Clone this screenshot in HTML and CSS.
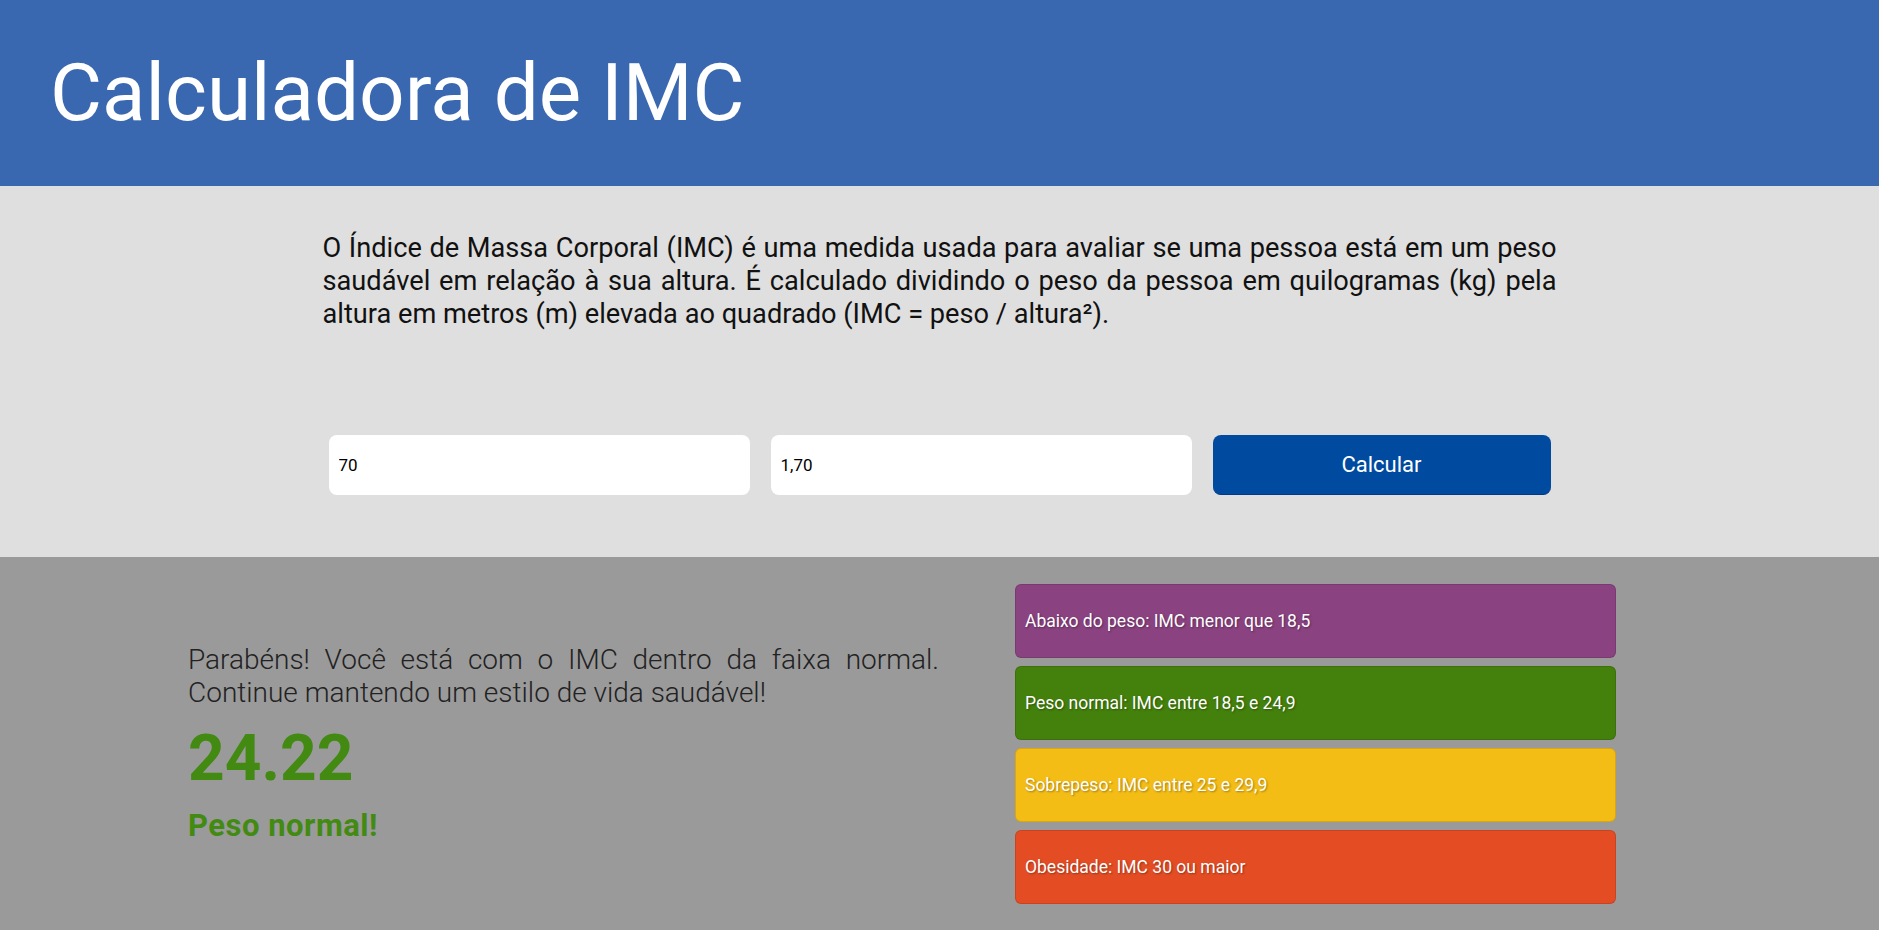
FILE: index.html
```html
<!DOCTYPE html>
<html lang="pt-BR">
<head>
<meta charset="utf-8">
<title>Calculadora de IMC</title>
<link rel="stylesheet" href="styles.css">
</head>
<body>
<header class="topbar">
  <h1 class="title">Calculadora de IMC</h1>
</header>
<section class="intro">
  <div class="intro-inner">
    <p class="lead">O Índice de Massa Corporal (IMC) é uma medida usada para avaliar se uma pessoa está em um peso saudável em relação à sua altura. É calculado dividindo o peso da pessoa em quilogramas (kg) pela altura em metros (m) elevada ao quadrado (IMC = peso / altura²).</p>
    <form class="form">
      <input class="field" type="text" value="70">
      <input class="field" type="text" value="1,70">
      <button class="btn" type="button">Calcular</button>
    </form>
  </div>
</section>
<section class="result">
  <div class="result-text">
    <p class="message">Parabéns! Você está com o IMC dentro da faixa normal. Continue mantendo um estilo de vida saudável!</p>
    <div class="value">24.22</div>
    <div class="status">Peso normal!</div>
  </div>
  <ul class="ranges">
    <li class="range range-under">Abaixo do peso: IMC menor que 18,5</li>
    <li class="range range-normal">Peso normal: IMC entre 18,5 e 24,9</li>
    <li class="range range-over">Sobrepeso: IMC entre 25 e 29,9</li>
    <li class="range range-obese">Obesidade: IMC 30 ou maior</li>
  </ul>
</section>
</body>
</html>
```
FILE: styles.css
```css
* { box-sizing: border-box; }
html, body { margin: 0; padding: 0; }
body {
  font-family: Roboto, "Liberation Sans", sans-serif;
  background: #9a9a9a;
  width: 1879px;
  height: 930px;
  overflow: hidden;
}
.topbar {
  background: #3a68b0;
  height: 186px;
  display: flex;
  align-items: center;
  padding: 0 50px;
}
.title {
  margin: 0;
  color: #ffffff;
  font-weight: 400;
  font-size: 80px;
}
.intro {
  background: #dfdfdf;
  height: 371px;
  padding-top: 46px;
}
.intro-inner {
  width: 1234px;
  margin: 0 auto;
}
.lead {
  margin: 0;
  font-size: 27.2px;
  line-height: 33px;
  color: #111;
  text-align: justify;
}
.form {
  display: flex;
  gap: 21px;
  padding: 0 6px;
  margin-top: 104px;
}
.field {
  width: 421px;
  height: 60px;
  border: none;
  border-radius: 8px;
  background: #fff;
  padding: 0 10px;
  font-family: Roboto, "Liberation Sans", sans-serif;
  font-size: 17px;
  color: #000;
}
.btn {
  width: 338px;
  height: 60px;
  border: none;
  border-bottom: 1px solid #003a80;
  border-radius: 8px;
  background: #004aa0;
  color: #fff;
  font-family: Roboto, "Liberation Sans", sans-serif;
  font-size: 22px;
}
.result {
  height: 373px;
  display: flex;
  align-items: center;
  padding-left: 188px;
}
.result-text {
  width: 751px;
}
.message {
  margin: 0 0 12px;
  font-size: 28px;
  font-weight: 300;
  color: #222;
  text-align: justify;
}
.value {
  font-size: 64px;
  font-weight: 700;
  color: #428a12;
  margin-bottom: 11px;
}
.status {
  font-size: 31px;
  letter-spacing: 0.5px;
  font-weight: 700;
  color: #428a12;
}
.ranges {
  list-style: none;
  margin: 0 0 0 76px;
  padding: 0;
  width: 601px;
  display: flex;
  flex-direction: column;
  gap: 8px;
}
.range {
  height: 74px;
  display: flex;
  align-items: center;
  padding: 0 9px;
  border-radius: 6px;
  border: 1px solid rgba(0,0,0,0.12);
  color: #fff;
  font-size: 17.5px;
  text-shadow: 1px 1px 2px rgba(0,0,0,0.35);
}
.range-under { background: #8a4281; }
.range-normal { background: #44800c; }
.range-over { background: #f4bd16; }
.range-obese { background: #e44d24; }
```
